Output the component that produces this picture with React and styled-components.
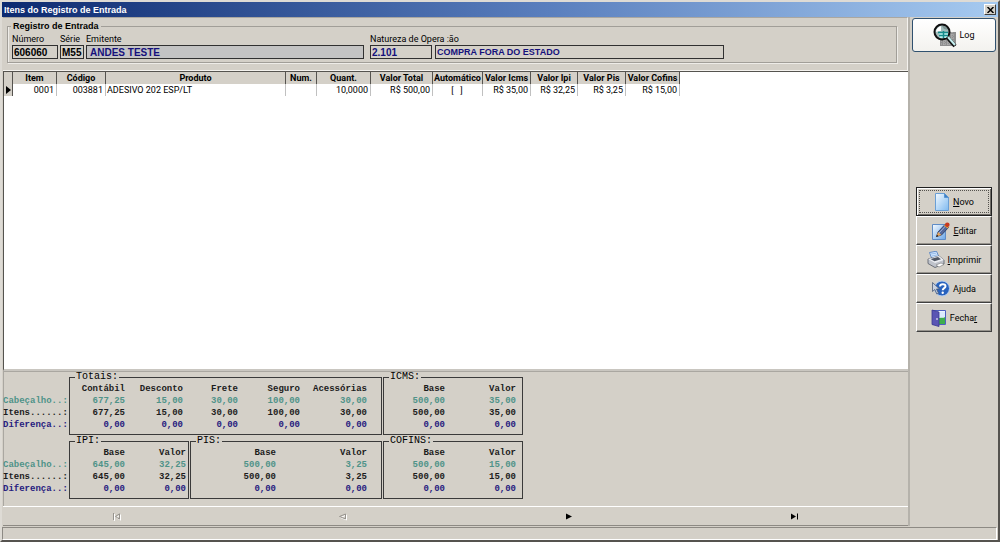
import React from "react";
import styled, { createGlobalStyle, css } from "styled-components";

const face = "#d4d0c8";
const ui = 'Roboto, "Liberation Sans", Arial, sans-serif';
const strong = '"Liberation Sans", Arial, sans-serif';
const mono = '"Liberation Mono", "Courier New", monospace';

const GlobalStyle = createGlobalStyle`
  * { box-sizing: border-box; }
  body { margin: 0; background: ${face}; color: #000; font: 9px/12px ${ui}; }
  button, input { font: inherit; color: inherit; }
`;

const Window = styled.div`
  display: flex;
  flex-direction: column;
  min-height: 100vh;
  border: 2px solid #dedbd5;
  border-right-color: #55534f;
  border-bottom-color: #55534f;
  background: ${face};
`;

const TitleBar = styled.header`
  display: flex;
  align-items: center;
  justify-content: space-between;
  height: 15px;
  padding: 0 2px;
  color: #fff;
  background: linear-gradient(90deg, #0c2a70, #5a7fbe 55%, #a6caf0);
`;

const Title = styled.h1`
  margin: 0;
  font: bold 9px/14px ${strong};
`;

const CloseButton = styled.button`
  display: grid;
  place-items: center;
  width: 12px;
  height: 11px;
  padding: 0;
  color: #000;
  background: ${face};
  border: 1px solid;
  border-color: #fff #404040 #404040 #fff;
`;

const Body = styled.div`
  display: flex;
  flex: 1;
`;

const Main = styled.main`
  display: flex;
  flex: 1;
  flex-direction: column;
  min-width: 0;
  margin-left: 1px;
  border-right: 2px solid #b5b2ab;
`;

const HeaderPanel = styled.section`
  padding: 2px 10px 7px 4px;
  border-top: 1px solid #aaa7a1;
  border-right: 1px solid #f4f2ee;
  border-bottom: 1px solid #f4f2ee;
`;

const RecordGroup = styled.fieldset`
  display: flex;
  min-width: 0;
  height: 43px;
  margin: 0;
  padding: 1px 4px;
  border: 1px solid #a19e98;
  box-shadow: inset 1px 0 #eeece8, 1px 1px #eeece8;
`;

const RecordLegend = styled.legend`
  margin-left: -1px;
  padding: 0 2px;
  font-family: ${strong};
  font-weight: bold;
`;

const Field = styled.label`
  display: flex;
  flex: 0 1 ${(p) => p.$width}px;
  flex-direction: column;
  min-width: 0;
  margin-right: ${(p) => p.$gap || 2}px;
  line-height: 12px;
  white-space: nowrap;
`;

const FieldInput = styled.input`
  width: 100%;
  height: 14px;
  padding: 0 1px;
  border: 1px solid #303030;
  border-radius: 0;
  outline: none;
  background: ${(p) => (p.$shaded ? "#c3c3c3" : face)};
  color: ${(p) => (p.$navy ? "#15107c" : "#000")};
  font-family: ${strong};
  font-weight: bold;
  ${(p) => p.$code && css`
    font-size: 10px;
  `}
  ${(p) => p.$shaded && css`
    padding-left: 3px;
    font-size: 10px;
  `}
`;

const GridArea = styled.section`
  flex: 1;
  min-height: 120px;
  overflow: hidden;
  background: #fff;
  border-top: 1px solid #55534f;
  border-left: 1px solid #55534f;
  border-bottom: 2px solid #c9c6c0;
`;

const ItemsTable = styled.table`
  table-layout: fixed;
  width: 676px;
  border-collapse: separate;
  border-spacing: 0;
`;

const HeadCell = styled.th`
  height: 12px;
  padding: 0;
  background: ${face};
  border-right: 1px solid #55534f;
  line-height: 12px;
  white-space: nowrap;
`;

const Cell = styled.td`
  height: 12px;
  padding: 0 2px 0 1px;
  border-right: 1px solid #c0c0c0;
  line-height: 12px;
  text-align: ${(p) => p.$align || "right"};
  white-space: pre;
`;

const MarkerCell = styled(Cell)`
  padding: 0;
  background: ${face};
  border-right-color: #55534f;
  text-align: center;
  svg { display: block; margin: 0 auto; }
`;

const TotalsPanel = styled.section`
  display: flex;
  flex-direction: column;
  gap: 1px;
  height: 135px;
  border-top: 1px solid #aaa7a1;
  border-left: 1px solid #aaa7a1;
  font: bold 9px/12px ${mono};
`;

const TotalsRow = styled.div`
  display: flex;
  gap: 1px;
`;

const RowNames = styled.ul`
  width: 64px;
  margin: 0;
  padding: 23px 0 0;
  list-style: none;
  white-space: nowrap;
`;

const tones = { header: "#4f9389", items: "#1c1c1c", diff: "#27207f" };

const RowName = styled.li`
  height: 12px;
  margin-left: -1px;
  color: ${(p) => tones[p.$tone]};
`;

const TotalsBox = styled.fieldset`
  flex: 0 0 ${(p) => p.$width}px;
  min-width: 0;
  height: 63px;
  margin: 0;
  padding: 1px 0 0;
  border: 1px solid #3a3a3a;
`;

const TotalsLegend = styled.legend`
  margin-left: 5px;
  padding: 0 1px;
  font: 10px/10px ${mono};
`;

const TotalsTable = styled.table`
  table-layout: fixed;
  width: ${(p) => p.$width}px;
  border-collapse: collapse;
  color: #1c1c1c;
  th, td { height: 12px; padding: 0; text-align: right; }
`;

const TotalsTr = styled.tr`
  color: ${(p) => tones[p.$tone]};
`;

const Navigator = styled.nav`
  display: flex;
  height: 20px;
  border-top: 1px solid #fff;
  border-bottom: 1px solid #8d8a84;
`;

const NavButton = styled.button`
  display: grid;
  flex: 1;
  place-items: center;
  padding: 0;
  border: 0;
  background: none;
  color: ${(p) => (p.disabled ? "#96938d" : "#000")};
  svg { filter: ${(p) => (p.disabled ? "drop-shadow(1px 1px 0 #fff)" : "none")}; }
`;

const Sidebar = styled.aside`
  display: flex;
  flex: 0 0 88px;
  flex-direction: column;
  padding: 1px 2px;
`;

const LogButton = styled.button`
  display: flex;
  align-items: center;
  justify-content: center;
  gap: 2px;
  height: 34px;
  padding: 0;
  border: 1px solid #30516f;
  border-radius: 3px;
  background: linear-gradient(#fff, #f3f2ee);
`;

const Actions = styled.div`
  display: flex;
  flex-direction: column;
  margin: 135px 4px 0;
`;

const ActionButton = styled.button`
  display: flex;
  align-items: center;
  justify-content: center;
  gap: 3px;
  height: 29px;
  padding: 0;
  background: ${face};
  border: 1px solid;
  border-color: #fff #404040 #404040 #fff;
  box-shadow: inset -1px -1px #96938d;
  ${(p) => p.$focused && css`
    border-color: #202020;
    box-shadow: inset 1px 1px #fff, inset -1px -1px #6f6c67;
    outline: 1px dotted #55534f;
    outline-offset: -4px;
  `}
`;

const StatusBar = styled.footer`
  height: 13px;
  margin: 1px 1px 0 0;
  border: 1px solid;
  border-color: #8d8a84 #fff #fff #8d8a84;
`;

const LogIcon = () => (
  <svg width="24" height="25" viewBox="0 0 24 25" aria-hidden="true">
    <path d="M7 9h16v14H7z" fill="#8f8f8f" />
    <path d="M8 12h14M8 15h14M8 18h14M8 21h14M11 9v14M15 9v14M19 9v14" stroke="#b9b9b9" strokeDasharray="1 1" />
    <circle cx="9" cy="9" r="7.5" fill="#a3bdbc" stroke="#101010" strokeWidth="2" />
    <path d="M3 9c0-3 2-5 5-6v5H6z" fill="#fff" />
    <path d="M6 9h9v6H7z" fill="#bdf0ef" />
    <path d="M5 9.500h10M6 12.500h9M10.500 8v7" stroke="#168b8b" strokeWidth="1.500" />
    <path d="M9 3h3l3 4-4-1z" fill="#7d9493" />
    <path d="M14 14l8 9" stroke="#111" strokeWidth="4" />
    <path d="M15 14l7 8" stroke="#c5f0f0" strokeWidth="2" />
  </svg>
);

const NewIcon = () => (
  <svg width="16" height="18" viewBox="0 0 16 18" aria-hidden="true">
    <defs><linearGradient id="sheet" x2="1" y2="1"><stop stopColor="#f4faff" /><stop offset="1" stopColor="#7fbaf0" /></linearGradient></defs>
    <path d="M1.500 .5h9l4 4v13h-13z" fill="url(#sheet)" stroke="#6a9fd5" />
    <path d="M10.500 .5v4h4z" fill="#3e82c8" stroke="#5a94d0" />
  </svg>
);

const EditIcon = () => (
  <svg width="19" height="18" viewBox="0 0 19 18" aria-hidden="true">
    <defs><linearGradient id="page" x2="1" y2="1"><stop stopColor="#f6fbff" /><stop offset="1" stopColor="#6aa6e8" /></linearGradient></defs>
    <path d="M1.500 2.500h13v15h-13z" fill="url(#page)" stroke="#5f8cc6" />
    <path d="M5.500 14.500l1.500-4.500 7-7.500 3.500 3-7 7.500z" fill="#54689a" stroke="#26365c" strokeWidth=".8" />
    <path d="M8 11l6.500-7" stroke="#9db3dd" />
    <path d="M5.500 14.500l1.500-4.500 3.500 3z" fill="#e8a65c" />
    <path d="M5.200 15l.8-2.200 1.400 1.200z" fill="#111" />
    <path d="M13.500 3l3.500 3" stroke="#e2a73c" strokeWidth="1.500" />
    <circle cx="16.300" cy="2.700" r="2.300" fill="#c8391e" />
  </svg>
);

const PrintIcon = () => (
  <svg width="18" height="17" viewBox="0 0 18 17" aria-hidden="true">
    <path d="M2.500 1.500l7-1.300 2.500 6-7 2z" fill="#cfe5ff" stroke="#4679bf" strokeWidth=".8" />
    <path d="M4 3l5-.8M5 5l5-1" stroke="#8db4e2" strokeWidth=".8" />
    <path d="M1 8l11-3 5 4v4l-9 3.500-7-4z" fill="#bfc3cb" stroke="#555b66" strokeWidth=".8" />
    <path d="M1 8l7 4 9-3-5-4z" fill="#eceef2" />
    <path d="M3.500 8l7.500-2 3 2.300-6.500 2z" fill="#4f5764" />
    <path d="M9 14l5-2 3 1.500-5 2.500z" fill="#fff" stroke="#777" strokeWidth=".6" />
  </svg>
);

const HelpIcon = () => (
  <svg width="18" height="17" viewBox="0 0 18 17" aria-hidden="true">
    <circle cx="10" cy="8.500" r="7.500" fill="#2862bd" stroke="#b5cff2" />
    <path d="M8 6.500c.2-3 5.500-3 5.500-.3 0 2-2.800 1.800-2.800 4" fill="none" stroke="#fff" strokeWidth="2" />
    <circle cx="10.700" cy="12.700" r="1.200" fill="#fff" />
    <path d="M.5 2.500v9l2.300-2 2 4.500 1.700-.8-2-4.200h3z" fill="#c9d2e0" stroke="#4a5a77" strokeWidth=".8" />
  </svg>
);

const ExitIcon = () => (
  <svg width="16" height="18" viewBox="0 0 16 18" aria-hidden="true">
    <path d="M2 1.500h12.500v14H2z" fill="#fff" stroke="#4d5fc0" />
    <path d="M8 9c2-1 4 0 6-1v7H8z" fill="#3fae4e" />
    <path d="M8 2.500h6V8c-2 1-4 0-6 1z" fill="#dcebfd" />
    <path d="M1 1l7 2v14.500l-7-2z" fill="#5a55b4" stroke="#3b3990" strokeWidth=".8" />
    <path d="M6 9v2" stroke="#fff" />
  </svg>
);

const NavIcon = ({ kind }) => (
  <svg width="9" height="7" viewBox="0 0 9 7" aria-hidden="true">
    {kind === "first" && <path d="M1.500 0v7M7.500 .8v5.400L3.500 3.500z" fill="none" stroke="currentColor" />}
    {kind === "prev" && <path d="M7.500 1v5L1.500 3.500z" fill="none" stroke="currentColor" />}
    {kind === "next" && <path d="M2 .5v6l6-3z" fill="currentColor" />}
    {kind === "last" && <path d="M1 .5v6l5-3zM7 .5h1v6H7z" fill="currentColor" />}
  </svg>
);

const columns = [
  { name: "Item", width: 44, value: "0001" },
  { name: "Código", width: 49, value: "003881" },
  { name: "Produto", width: 180, value: "ADESIVO 202 ESP/LT", align: "left" },
  { name: "Num.", width: 31, value: "" },
  { name: "Quant.", width: 54, value: "10,0000" },
  { name: "Valor Total", width: 62, value: "R$ 500,00" },
  { name: "Automático", width: 50, value: "[   ]", align: "center" },
  { name: "Valor Icms", width: 48, value: "R$ 35,00" },
  { name: "Valor Ipi", width: 47, value: "R$ 32,25" },
  { name: "Valor Pis", width: 48, value: "R$ 3,25" },
  { name: "Valor Cofins", width: 54, value: "R$ 15,00" },
];

const toneOrder = ["header", "items", "diff"];

const taxColumns = (base, value, widths) => [
  { name: "Base", width: widths[0], values: [base, base, "0,00"] },
  { name: "Valor", width: widths[1], values: [value, value, "0,00"] },
];

const totalsRows = [
  [
    {
      title: "Totais:", width: 313, columns: [
        { name: "Contábil", width: 55, values: ["677,25", "677,25", "0,00"] },
        { name: "Desconto", width: 58, values: ["15,00", "15,00", "0,00"] },
        { name: "Frete", width: 55, values: ["30,00", "30,00", "0,00"] },
        { name: "Seguro", width: 62, values: ["100,00", "100,00", "0,00"] },
        { name: "Acessórias", width: 67, values: ["30,00", "30,00", "0,00"] },
      ],
    },
    { title: "ICMS:", width: 140, columns: taxColumns("500,00", "35,00", [61, 71]) },
  ],
  [
    { title: "IPI:", width: 120, columns: taxColumns("645,00", "32,25", [55, 61]) },
    { title: "PIS:", width: 192, columns: taxColumns("500,00", "3,25", [85, 91]) },
    { title: "COFINS:", width: 140, columns: taxColumns("500,00", "15,00", [61, 71]) },
  ],
];

const Totals = ({ title, width, columns: cols }) => (
  <TotalsBox $width={width}>
    <TotalsLegend>{title}</TotalsLegend>
    <TotalsTable $width={cols.reduce((sum, c) => sum + c.width, 0)}>
      <colgroup>{cols.map((c) => <col key={c.name} width={c.width} />)}</colgroup>
      <thead><tr>{cols.map((c) => <th key={c.name} scope="col">{c.name}</th>)}</tr></thead>
      <tbody>
        {toneOrder.map((tone, i) => (
          <TotalsTr key={tone} $tone={tone}>{cols.map((c) => <td key={c.name}>{c.values[i]}</td>)}</TotalsTr>
        ))}
      </tbody>
    </TotalsTable>
  </TotalsBox>
);

export default function App() {
  return (
    <Window>
      <GlobalStyle />
      <TitleBar>
        <Title>Itens do Registro de Entrada</Title>
        <CloseButton aria-label="Fechar janela">
          <svg width="7" height="6" viewBox="0 0 7 6"><path d="M.5 0l6 6M6.500 0l-6 6" stroke="#000" strokeWidth="1.500" /></svg>
        </CloseButton>
      </TitleBar>
      <Body>
        <Main>
          <HeaderPanel>
            <RecordGroup>
              <RecordLegend>Registro de Entrada</RecordLegend>
              <Field $width={46}>Número<FieldInput readOnly $code value="606060" /></Field>
              <Field $width={24}>Série<FieldInput readOnly $code value="M55" /></Field>
              <Field $width={278} $gap={6}>Emitente<FieldInput readOnly $shaded $navy value="ANDES TESTE" /></Field>
              <Field $width={62} $gap={3}>Natureza de Opera :ão<FieldInput readOnly $code $navy value="2.101" /></Field>
              <Field $width={289}>{"\u00a0"}<FieldInput readOnly $navy aria-label="Descrição da natureza" value="COMPRA FORA DO ESTADO" /></Field>
            </RecordGroup>
          </HeaderPanel>
          <GridArea>
            <ItemsTable>
              <colgroup>
                <col width="9" />
                {columns.map((c) => <col key={c.name} width={c.width} />)}
              </colgroup>
              <thead>
                <tr><HeadCell />{columns.map((c) => <HeadCell key={c.name} scope="col">{c.name}</HeadCell>)}</tr>
              </thead>
              <tbody>
                <tr>
                  <MarkerCell><svg width="5" height="8" viewBox="0 0 5 8"><path d="M0 0l5 4-5 4z" /></svg></MarkerCell>
                  {columns.map((c) => <Cell key={c.name} $align={c.align}>{c.value}</Cell>)}
                </tr>
              </tbody>
            </ItemsTable>
          </GridArea>
          <TotalsPanel>
            {totalsRows.map((boxes, i) => (
              <TotalsRow key={i}>
                <RowNames>
                  <RowName $tone="header">Cabeçalho..:</RowName>
                  <RowName $tone="items">Itens......:</RowName>
                  <RowName $tone="diff">Diferença..:</RowName>
                </RowNames>
                {boxes.map((box) => <Totals key={box.title} {...box} />)}
              </TotalsRow>
            ))}
          </TotalsPanel>
          <Navigator aria-label="Registros">
            <NavButton disabled aria-label="Primeiro"><NavIcon kind="first" /></NavButton>
            <NavButton disabled aria-label="Anterior"><NavIcon kind="prev" /></NavButton>
            <NavButton aria-label="Próximo"><NavIcon kind="next" /></NavButton>
            <NavButton aria-label="Último"><NavIcon kind="last" /></NavButton>
          </Navigator>
        </Main>
        <Sidebar>
          <LogButton><LogIcon />Log</LogButton>
          <Actions>
            <ActionButton $focused><NewIcon /><span><u>N</u>ovo</span></ActionButton>
            <ActionButton><EditIcon /><span><u>E</u>ditar</span></ActionButton>
            <ActionButton><PrintIcon /><span><u>I</u>mprimir</span></ActionButton>
            <ActionButton><HelpIcon /><span>A<u>j</u>uda</span></ActionButton>
            <ActionButton><ExitIcon /><span>Fecha<u>r</u></span></ActionButton>
          </Actions>
        </Sidebar>
      </Body>
      <StatusBar />
    </Window>
  );
}
